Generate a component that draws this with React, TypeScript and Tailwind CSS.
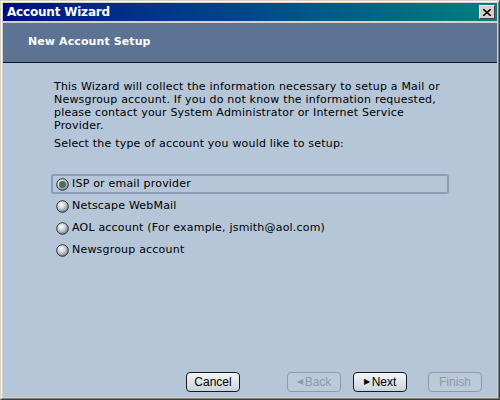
import React from "react";

function Radio({ checked }: { checked?: boolean }) {
  return (
    <svg width="13" height="13" viewBox="0 0 13 13" className="shrink-0">
      <defs>
        <radialGradient id="rg" cx="0.4" cy="0.35" r="0.7">
          <stop offset="0" stopColor="#ffffff" />
          <stop offset="0.5" stopColor="#c8ccd0" />
          <stop offset="1" stopColor="#6d747c" />
        </radialGradient>
      </defs>
      <circle cx="6.5" cy="6.5" r="5.8" fill="url(#rg)" stroke="#2e3338" strokeWidth="1" />
      {checked && <circle cx="6.5" cy="6.5" r="3.4" fill="#4d6b5a" />}
    </svg>
  );
}

function Btn({ children, disabled }: { children: React.ReactNode; disabled?: boolean }) {
  return (
    <div
      className={
        "w-[54px] h-[20px] rounded-[4px] border flex items-center justify-center text-[12px] " +
        (disabled
          ? "border-[#8e9aa8] text-[#8e9aa8] bg-[#bccbd9]"
          : "border-[#1a1a1a] text-black bg-gradient-to-b from-[#f4f6f8] to-[#c9d3dc]")
      }
      style={{ fontFamily: '"Liberation Sans", Arial, sans-serif' }}
    >
      {children}
    </div>
  );
}

export default function App() {
  const body = { fontFamily: '"DejaVu Sans", Verdana, sans-serif' };
  return (
    <div className="w-[500px] h-[400px] bg-[#d4d0c8] border-t border-l border-t-[#d4d0c8] border-l-[#d4d0c8] border-r border-b border-r-[#404040] border-b-[#404040]">
      <div className="w-full h-full border-t border-l border-t-white border-l-white border-r border-b border-r-[#808080] border-b-[#808080] p-px flex flex-col">
        <div className="h-[18px] bg-gradient-to-r from-[#000a80] via-[#00488a] to-[#008080] flex items-center justify-between pl-[4px] pr-[2px]">
          <span
            className="text-white font-bold text-[12px] leading-none"
            style={{ fontFamily: '"DejaVu Sans", Tahoma, sans-serif', letterSpacing: "-0.2px" }}
          >
            Account Wizard
          </span>
          <div className="w-[16px] h-[14px] bg-[#d4d0c8] border-t border-l border-t-white border-l-white border-r border-b border-r-[#404040] border-b-[#404040] flex items-center justify-center">
            <svg width="8" height="7" viewBox="0 0 8 7">
              <path d="M0 0 L8 7 M8 0 L0 7" stroke="black" strokeWidth="1.6" />
            </svg>
          </div>
        </div>
        <div className="h-[2px]" />
        <div className="h-[40px] bg-[#5c7394] border-b border-b-[#101820] flex items-center pl-[25px]">
          <span className="text-white font-bold text-[11px]" style={{ ...body, letterSpacing: "0.1px" }}>
            New Account Setup
          </span>
        </div>
        <div className="flex-1 bg-[#b4c6d8] flex flex-col" style={body}>
          <div
            className="ml-[51px] w-[392px] pt-[17px] text-[11px] leading-[13px] text-black"
            style={{ letterSpacing: "0.2px" }}
          >
            <p>
              This Wizard will collect the information necessary to setup a Mail or Newsgroup account. If you do not
              know the information requested, please contact your System Administrator or Internet Service Provider.
            </p>
            <p className="mt-[5px]">Select the type of account you would like to setup:</p>
          </div>
          <div
            className="mt-[24px] ml-[48px] w-[398px] flex flex-col gap-[2px] text-[11px] text-black"
            style={{ letterSpacing: "0.2px" }}
          >
            <div className="h-[20px] border-2 border-[#8b9db4] rounded-[3px] flex items-center gap-[3px] pl-[3px]">
              <Radio checked />
              <span>ISP or email provider</span>
            </div>
            <div className="h-[20px] flex items-center gap-[3px] pl-[5px]">
              <Radio />
              <span>Netscape WebMail</span>
            </div>
            <div className="h-[20px] flex items-center gap-[3px] pl-[5px]">
              <Radio />
              <span>AOL account (For example, jsmith@aol.com)</span>
            </div>
            <div className="h-[20px] flex items-center gap-[3px] pl-[5px]">
              <Radio />
              <span>Newsgroup account</span>
            </div>
          </div>
          <div className="mt-auto mb-[5px] flex items-center pl-[183px]">
            <Btn>Cancel</Btn>
            <div className="ml-[47px]">
              <Btn disabled>
                <span className="text-[8px] mr-[2px]">◀</span>Back
              </Btn>
            </div>
            <div className="ml-[12px]">
              <Btn>
                <span className="text-[8px] mr-[2px]">▶</span>Next
              </Btn>
            </div>
            <div className="ml-[21px]">
              <Btn disabled>Finish</Btn>
            </div>
          </div>
        </div>
      </div>
    </div>
  );
}
